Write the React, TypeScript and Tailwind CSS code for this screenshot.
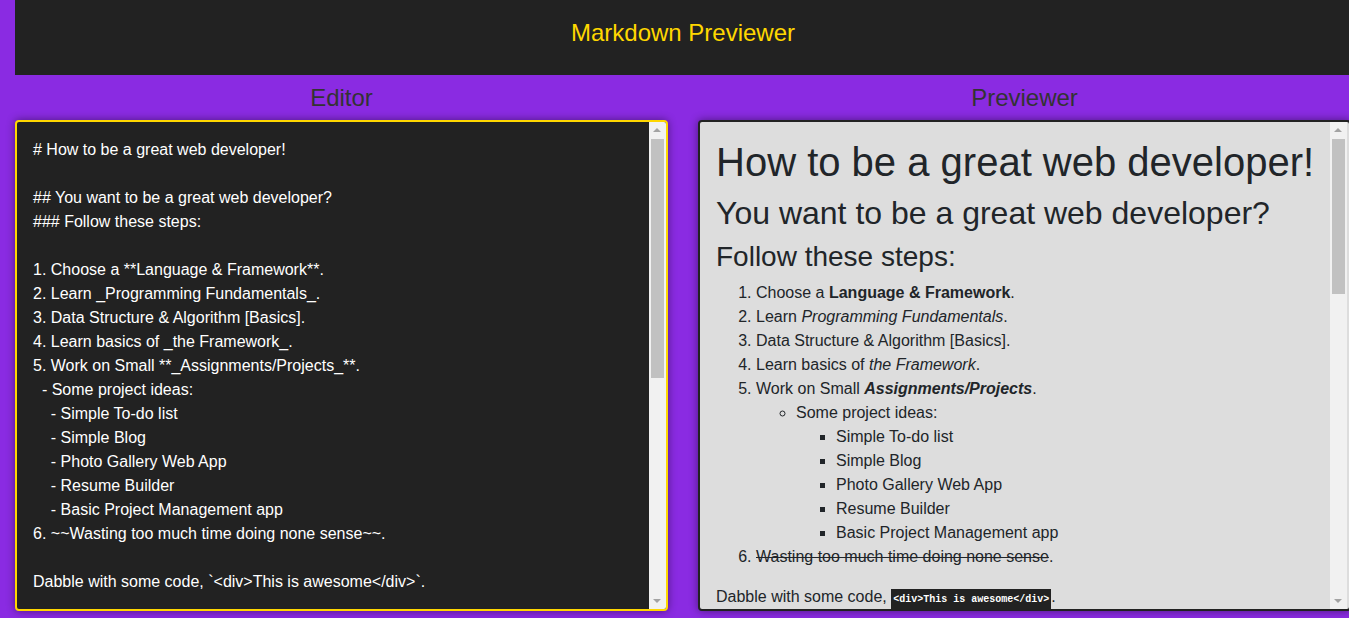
const editorText = `# How to be a great web developer!

## You want to be a great web developer?
### Follow these steps:

1. Choose a **Language & Framework**.
2. Learn _Programming Fundamentals_.
3. Data Structure & Algorithm [Basics].
4. Learn basics of _the Framework_.
5. Work on Small **_Assignments/Projects_**.
  - Some project ideas:
    - Simple To-do list
    - Simple Blog
    - Photo Gallery Web App
    - Resume Builder
    - Basic Project Management app
6. ~~Wasting too much time doing none sense~~.

Dabble with some code, \`<div>This is awesome</div>\`.`;

function Scrollbar({ thumbTop, thumbHeight }: { thumbTop: number; thumbHeight: number }) {
  return (
    <div className="absolute top-0 right-0 bottom-0 w-[17px] bg-[#f1f1f1]">
      {/* up arrow */}
      <div className="absolute top-[6px] left-[4px] w-0 h-0 border-l-[4px] border-r-[4px] border-b-[4px] border-l-transparent border-r-transparent border-b-[#a3a3a3]" />
      <div
        className="absolute left-[2px] right-[2px] bg-[#c1c1c1]"
        style={{ top: thumbTop, height: thumbHeight }}
      />
      {/* down arrow */}
      <div className="absolute bottom-[6px] left-[4px] w-0 h-0 border-l-[4px] border-r-[4px] border-t-[4px] border-l-transparent border-r-transparent border-t-[#a3a3a3]" />
    </div>
  );
}

export default function App() {
  return (
    <div className="h-[618px] overflow-hidden bg-[#8a2be2] font-['Liberation_Sans',Arial,sans-serif]">
      <div className="w-[1351px] pl-[15px]">
        {/* Header */}
        <div className="h-[75px] bg-[#222] flex justify-center pt-[19px]">
          <h1 className="text-[24px] leading-[28px] text-[#ffd700]">Markdown Previewer</h1>
        </div>

        <div className="flex gap-[30px] pt-[8px]">
          {/* Editor */}
          <div className="w-[653px] shrink-0">
            <h2 className="text-[24px] leading-[29px] text-[#333] text-center mb-[8px]">Editor</h2>
            <div className="relative h-[491px] rounded-[4px] border-2 border-[#ffd700] bg-[#222] overflow-hidden shadow-[0_0_8px_rgba(0,0,0,0.45)]">
              <pre className="px-[16px] py-[16px] text-white text-[16px] leading-[24px] whitespace-pre-wrap font-['Liberation_Sans',Arial,sans-serif]">
                {editorText}
              </pre>
              <Scrollbar thumbTop={17} thumbHeight={239} />
            </div>
          </div>

          {/* Previewer */}
          <div className="w-[653px] shrink-0">
            <h2 className="text-[24px] leading-[29px] text-[#333] text-center mb-[8px]">Previewer</h2>
            <div className="relative h-[491px] rounded-[4px] border-2 border-[#222] bg-[#ddd] overflow-hidden shadow-[0_0_8px_rgba(0,0,0,0.45)] text-[#212529]">
              <div className="px-[16px] py-[16px] text-[16px] leading-[24px]">
                <h1 className="text-[40px] leading-[48px] mb-[8px]">How to be a great web developer!</h1>
                <h2 className="text-[32px] leading-[38px] mb-[8px]">You want to be a great web developer?</h2>
                <h3 className="text-[28px] leading-[33px] mb-[8px]">Follow these steps:</h3>
                <ol className="list-decimal pl-[40px] mb-[16px]">
                  <li>
                    Choose a <strong>Language &amp; Framework</strong>.
                  </li>
                  <li>
                    Learn <em>Programming Fundamentals</em>.
                  </li>
                  <li>Data Structure &amp; Algorithm [Basics].</li>
                  <li>
                    Learn basics of <em>the Framework</em>.
                  </li>
                  <li>
                    Work on Small{" "}
                    <strong>
                      <em>Assignments/Projects</em>
                    </strong>
                    .
                    <ul className="list-[circle] pl-[40px]">
                      <li>
                        Some project ideas:
                        <ul className="list-[square] pl-[40px]">
                          <li>Simple To-do list</li>
                          <li>Simple Blog</li>
                          <li>Photo Gallery Web App</li>
                          <li>Resume Builder</li>
                          <li>Basic Project Management app</li>
                        </ul>
                      </li>
                    </ul>
                  </li>
                  <li>
                    <del>Wasting too much time doing none sense</del>.
                  </li>
                </ol>
                <p>
                  Dabble with some code,{" "}
                  <code className="bg-[#222] text-white font-bold text-[10px] px-[2px] py-[5px] font-['Liberation_Mono',monospace]">
                    &lt;div&gt;This is awesome&lt;/div&gt;
                  </code>
                  .
                </p>
              </div>
              <div className="absolute top-0 bottom-0 right-[2px] w-[17px]">
                <Scrollbar thumbTop={17} thumbHeight={155} />
              </div>
            </div>
          </div>
        </div>
      </div>
    </div>
  );
}
